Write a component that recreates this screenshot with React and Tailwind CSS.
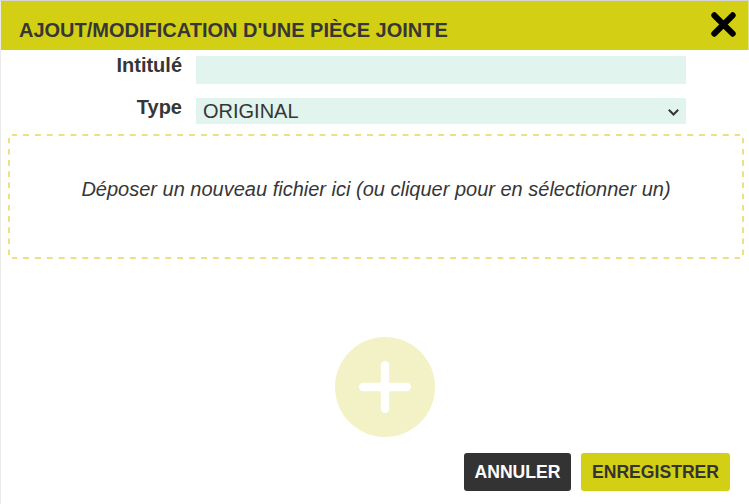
function DashedFrame() {
  return (
    <svg className="pointer-events-none absolute inset-0 h-full w-full" viewBox="0 0 736 125" fill="none" stroke="#ecdf86" strokeWidth="2">
      <path d="M4 1H732" strokeDasharray="5.93 5.93" strokeDashoffset="0.8" />
      <path d="M4 124H732" strokeDasharray="5.93 5.93" strokeDashoffset="0.8" />
      <path d="M1 4V121" strokeDasharray="5.6 5.6" strokeDashoffset="0.3" />
      <path d="M735 4V121" strokeDasharray="5.6 5.6" strokeDashoffset="0.3" />
    </svg>
  );
}

function Header() {
  return (
    <header className="flex h-[49px] items-center justify-between border-r border-[#e6e382] bg-[#d3cf15] pl-[18px] pr-3">
      <h1 className="pt-[9px] text-[20px] leading-6 font-bold whitespace-nowrap">
        AJOUT/MODIFICATION D'UNE PIÈCE JOINTE
      </h1>
      <button type="button" aria-label="Fermer" className="mb-[2px] h-[25px] w-[25px]">
        <svg viewBox="0 0 25 25" className="h-full w-full" stroke="#000" strokeWidth="6" strokeLinecap="round">
          <path d="M3.3 3.3L21.7 21.7M21.7 3.3L3.3 21.7" />
        </svg>
      </button>
    </header>
  );
}

export default function App() {
  return (
    <div className="flex h-[504px] w-[749px] flex-col overflow-hidden border-t border-l border-t-[#d5d5d8] border-l-[#ebebeb] bg-white font-['Liberation_Sans',Arial,sans-serif] text-[#363636]">
      <Header />
      <form className="flex flex-1 flex-col">
        <div className="flex pt-[6px]">
          <label className="-mt-[3px] w-[181px] text-right text-[20px] leading-6 font-bold">Intitulé</label>
          <div className="ml-[14px] h-7 w-[490px] bg-[#e1f4ed]" />
        </div>
        <div className="mt-[14px] flex">
          <label className="-mt-[3px] w-[181px] text-right text-[20px] leading-6 font-bold">Type</label>
          <div className="ml-[14px] flex h-[26px] w-[490px] items-center justify-between bg-[#e1f4ed] pr-[7px] pl-[7px] text-[20px] leading-[26px]">
            <span>ORIGINAL</span>
            <svg width="11" height="7" viewBox="0 0 11 7" className="mt-[2px]" fill="none" stroke="#363636" strokeWidth="2">
              <path d="M.8 .8L5.5 5.5L10.2 .8" />
            </svg>
          </div>
        </div>
        <div className="relative mt-[10px] ml-[7px] h-[125px] w-[736px] pt-[43px] text-center text-[20px] leading-6 italic">
          <DashedFrame />
          Déposer un nouveau fichier ici (ou cliquer pour en sélectionner un)
        </div>
        <div className="mt-[78px] ml-[334px] h-[100px] w-[100px] rounded-full bg-[#f3f2c6]">
          <svg viewBox="0 0 100 100" stroke="#fff" strokeWidth="8.4" strokeLinecap="round">
            <path d="M28.2 50H71.8M50 28.2V71.8" />
          </svg>
        </div>
        <div className="mt-4 flex justify-end gap-[10px] pr-[19px] text-[17.6px] leading-[38px] font-bold">
          <button type="button" className="h-[38px] w-[107px] rounded-[3px] bg-[#333] text-white">ANNULER</button>
          <button type="submit" className="h-[38px] w-[149px] rounded-[3px] bg-[#d3cf15] text-[#333]">ENREGISTRER</button>
        </div>
      </form>
    </div>
  );
}
